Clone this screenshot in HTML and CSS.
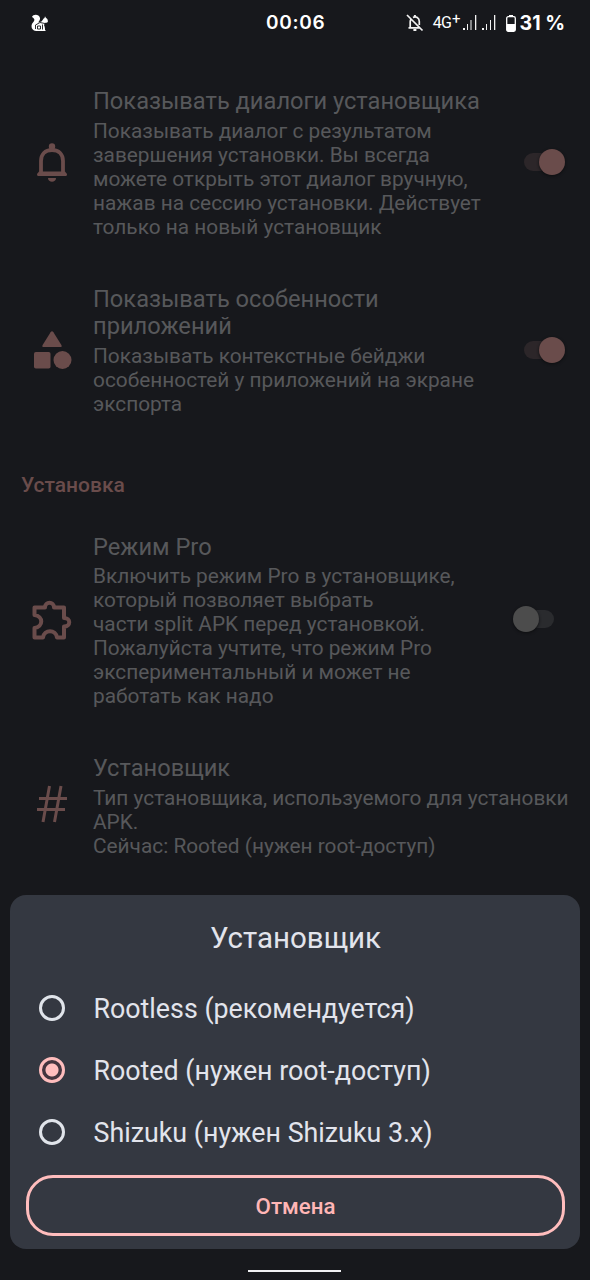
FILE: index.html
```html
<!DOCTYPE html>
<html lang="ru">
<head>
<meta charset="utf-8">
<title>Установщик</title>
<link rel="stylesheet" href="styles.css">
</head>
<body>
<div class="screen">
  <header class="status">
    <svg class="app-icon" width="18" height="18" viewBox="0 0 18 18"><path d="M1 3C2 0 8-.3 9 4c.3 2-1 3.500-2 4.500L10.500 7.500l1.500-2c.5-1 1-1.300 1.500-1.500L14 2.200 15 4c1.500.5 2 2 1.800 4-1 1-2 .5-2.800 1l-1 2c1 2 1 4 1 5l1 1H5C0 16.500-.5 11 2 8.500 4 6 4 5 1 3Z" fill="#fff"/><path d="M4.500 15V11L9 8.500l5 1M11.500 10.500v5M6.500 12h3v3h-3Z" fill="none" stroke="#17181c" stroke-width=".9"/></svg>
    <span class="clock">00:06</span>
    <div class="indicators">
      <svg class="mute" width="18" height="18" viewBox="0 0 18 18" fill="none" stroke="#f2f2f2" stroke-width="1.700"><path d="M1 1l15.500 15.500M2.500 13.800h11.200M4.200 13.500V8c0-1 .2-1.700.6-2.500M7 3.400c3-1.500 6.300.6 6.300 4v3.500"/><path d="M8.900 1v2M7.400 16h3" stroke-width="2"/></svg>
      <span class="network">4G<span class="plus">+</span></span>
      <svg class="signal" width="33" height="16" viewBox="0 0 33 16" fill="#f2f2f2"><path d="M0 13h2v2H0zM4 9h1v6H4zM7.500 5h1v10h-1zM12 0h1.300v15H12zM19 13h2v2h-2zM23 9h1v6h-1zM27 5h1v10h-1zM31 0h1.300v15H31z"/></svg>
      <svg class="battery" width="10" height="17" viewBox="0 0 10 17"><path d="M3 0h4v2H3z" fill="#fff"/><rect x=".7" y="1.700" width="8.600" height="14.600" rx="1.500" fill="none" stroke="#fff" stroke-width="1.300"/><path d="M1 9h8v7H1z" fill="#fff"/></svg>
      <span class="percent">31 %</span>
    </div>
  </header>

  <main class="settings">
    <section class="item">
      <svg class="icon" width="40" height="40" viewBox="0 0 40 40"><path d="M9 31V18c0-6.500 4-11 11-11s11 4.500 11 11v13" fill="none" stroke="#6a4c4b" stroke-width="3.800" transform="translate(0 1)"/><path d="M7 29.500h26l2 2.500c0 1.500-.5 2-1.500 2h-27C5.500 34 5 33.500 5 32Z" fill="#6a4c4b"/><circle cx="20" cy="4.500" r="3.200" fill="#6a4c4b"/><path d="M16 36h8c0 5-8 5-8 0Z" fill="#6a4c4b"/></svg>
      <div class="copy">
        <h3>Показывать диалоги установщика</h3>
        <p>Показывать диалог с результатом<br>завершения установки. Вы всегда<br>можете открыть этот диалог вручную,<br>нажав на сессию установки. Действует<br>только на новый установщик</p>
      </div>
      <div class="switch on"></div>
    </section>

    <section class="item">
      <svg class="icon" width="40" height="40" viewBox="0 0 40 40" fill="#6a4c4b"><path d="M18.600 2.200q1.400-2 2.800 0l8 12.800q1 2-1 2H11.600q-2 0-1-2Z"/><rect x="2" y="22" width="16.500" height="16.500" rx="1.800"/><circle cx="30.500" cy="30" r="9"/></svg>
      <div class="copy">
        <h3>Показывать особенности<br>приложений</h3>
        <p>Показывать контекстные бейджи<br>особенностей у приложений на экране<br>экспорта</p>
      </div>
      <div class="switch on"></div>
    </section>

    <h2 class="section-title">Установка</h2>

    <section class="item">
      <svg class="icon" width="40" height="40" viewBox="0 0 40 40" fill="none" stroke="#6a4c4b" stroke-width="4" stroke-linejoin="round"><path d="M2.500 7.500h10.500c0-6.500 9-6.500 9 0h10V18c7 0 7 8.500 0 8.500V37.500H25c-1-8.500-13-8.500-14 0H2.500V28c9-1 9-12 0-13Z"/></svg>
      <div class="copy">
        <h3>Режим Pro</h3>
        <p>Включить режим Pro в установщике,<br>который позволяет выбрать<br>части split APK перед установкой.<br>Пожалуйста учтите, что режим Pro<br>экспериментальный и может не<br>работать как надо</p>
      </div>
      <div class="switch off"></div>
    </section>

    <section class="item">
      <svg class="icon hash" width="40" height="40" viewBox="0 0 40 40" fill="none" stroke="#6a4c4b" stroke-width="3"><path d="M17.500 2 11 38M29 2l-6.500 36M7 14.500h28M5 25.500h28"/></svg>
      <div class="copy">
        <h3>Установщик</h3>
        <p>Тип установщика, используемого для установки<br>APK.<br>Сейчас: Rooted (нужен root-доступ)</p>
      </div>
    </section>
  </main>

  <div class="sheet">
    <h1>Установщик</h1>
    <div class="option"><span class="radio"></span><span>Rootless (рекомендуется)</span></div>
    <div class="option"><span class="radio checked"></span><span>Rooted (нужен root-доступ)</span></div>
    <div class="option"><span class="radio"></span><span>Shizuku (нужен Shizuku 3.x)</span></div>
    <button class="cancel">Отмена</button>
  </div>
  <div class="home-bar"></div>
</div>
</body>
</html>
```
FILE: styles.css
```css
* { box-sizing: border-box; }
body { margin: 0; background: #17181c; font-family: Roboto, "Noto Sans", sans-serif; }
h1, h2, h3, p { margin: 0; font-weight: 400; }
.screen { position: relative; width: 590px; height: 1280px; overflow: hidden; background: #17181c; }

.status { display: flex; align-items: center; height: 46px; padding: 0 26px 0 31px; color: #fff; }
.app-icon { flex: none; }
.clock { margin-left: 217px; font: 600 19px/46px Inter, sans-serif; letter-spacing: .7px; }
.indicators { display: flex; align-items: center; margin-left: auto; }
.network { margin-left: 10px; font-size: 16px; line-height: 20px; white-space: nowrap; letter-spacing: -.9px; }
.plus { font-size: 15px; position: relative; top: -4px; margin-left: 1px; }
.signal { margin-left: 3px; }
.battery { margin-left: 10px; }
.percent { margin: 0 -1px 0 4px; font: 700 19.5px/46px Inter, sans-serif; white-space: nowrap; }
.mute { margin-right: -1px; }

.settings { padding-top: 42px; }
.item { display: flex; align-items: center; padding: 0 25px 0 31.5px; margin-bottom: 47px; }
.icon { flex: none; margin: -2px 21.5px 0 0; }
.icon.hash { margin-top: -4px; }
.copy { flex: 1; white-space: nowrap; color: #57585b; }
.copy h3 { margin-bottom: 3px; font-size: 23.65px; line-height: 27.5px; }
.copy p { font-size: 20.83px; line-height: 24px; }
.section-title { margin: 57px 0 37px 21px; font-size: 21px; line-height: 24px; font-weight: 500; color: #6a4c4b; }

.switch { position: relative; flex: none; width: 42px; height: 26px; margin-top: -2px; }
.switch::before { content: ""; position: absolute; inset: 4px 7px 4px 1px; border-radius: 9px; background: #2c2629; }
.switch::after { content: ""; position: absolute; top: 0; right: 0; width: 26px; height: 26px; border-radius: 50%; background: #6a4c4b; box-shadow: 0 1px 3px #0d0e10; }
.switch.off { margin: -3px 10px 0 0; }
.switch.off::before { inset: 4px 1px 4px 7px; background: #2a2b2e; }
.switch.off::after { right: 16px; background: #4c4c4c; }

.sheet { position: absolute; left: 10px; top: 895px; width: 570px; height: 354px; padding: 24px 15px 13px 16px; border-radius: 16px; background: #343841; color: #e2e4ec; display: flex; flex-direction: column; }
.sheet h1 { font-size: 29.5px; line-height: 38px; text-align: center; margin-bottom: 20px; }
.option { display: flex; align-items: center; height: 62px; padding: 2px 0 0 13px; font-size: 26.8px; white-space: nowrap; }
.radio { width: 26px; height: 26px; margin: -3px 28.5px 0 0; border: 3px solid #e0e4ea; border-radius: 50%; }
.radio.checked { border-color: #ffbdbd; background: radial-gradient(circle, #ffbdbd 6px, #44343e 7px); }
.cancel { flex: none; height: 61px; margin-top: 12px; padding-top: 2px; border: 3px solid #ffbdbd; border-radius: 27px; background: none; color: #ffb6b6; font: 500 22.3px/26px Roboto, sans-serif; }
.home-bar { position: absolute; left: 248px; top: 1270px; width: 93px; height: 2px; background: #f0f0f2; }
```
